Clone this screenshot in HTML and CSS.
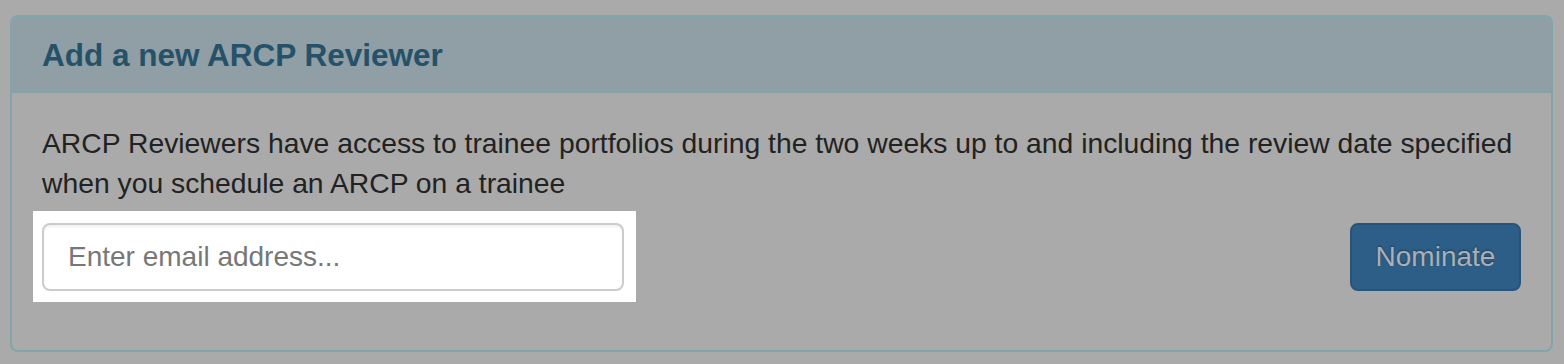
FILE: index.html
```html
<!DOCTYPE html>
<html>
<head>
<meta charset="utf-8">
<link rel="stylesheet" href="styles.css">
</head>
<body>
<div class="page">
  <div class="panel">
    <div class="panel-heading">
      <h3 class="panel-title">Add a new ARCP Reviewer</h3>
    </div>
    <div class="panel-body">
      <p class="intro">ARCP Reviewers have access to trainee portfolios during the two weeks up to and including the review date specified when you schedule an ARCP on a trainee</p>
      <div class="form-row">
        <div class="highlight">
          <input class="email" type="text" placeholder="Enter email address...">
        </div>
        <button class="btn-nominate" type="button">Nominate</button>
      </div>
    </div>
  </div>
</div>
</body>
</html>
```

FILE: styles.css
```css
html, body {
  margin: 0;
  padding: 0;
}
body {
  background: #aaaaaa;
  font-family: "Liberation Sans", Arial, Helvetica, sans-serif;
  width: 1564px;
  height: 364px;
  overflow: hidden;
}
.page {
  padding: 15px 11px 0 10px;
}
.panel {
  border: 2px solid #82a4ab;
  border-radius: 8px;
}
.panel-heading {
  background: #909fa5;
  border-bottom: 2px solid #82a4ab;
  border-radius: 6px 6px 0 0;
  height: 76px;
  display: flex;
  align-items: center;
  padding: 0 30px;
  box-sizing: border-box;
}
.panel-title {
  margin: 0;
  font-size: 31.5px;
  font-weight: bold;
  color: #255169;
  padding-top: 2px;
}
.panel-body {
  padding: 30px 30px 59px 30px;
}
.intro {
  margin: 0 0 20px 0;
  font-size: 28.3px;
  line-height: 40px;
  color: #222222;
}
.form-row {
  display: flex;
  justify-content: space-between;
  align-items: center;
}
.highlight {
  position: relative;
  z-index: 0;
}
.highlight::before {
  content: "";
  position: absolute;
  top: -12px;
  left: -9px;
  right: -12px;
  bottom: -11px;
  background: #ffffff;
  z-index: -1;
}
.email {
  display: block;
  width: 582px;
  height: 68px;
  box-sizing: border-box;
  border: 2px solid #cccccc;
  border-radius: 8px;
  padding: 0 24px;
  font-family: "Liberation Sans", Arial, Helvetica, sans-serif;
  font-size: 28px;
  color: #555555;
  background: #ffffff;
  box-shadow: inset 0 2px 2px rgba(0,0,0,0.06);
  outline: none;
}
.email::placeholder {
  color: #777777;
}
.btn-nominate {
  width: 171px;
  height: 68px;
  box-sizing: border-box;
  background: #2d5e87;
  border: 2px solid #285479;
  border-radius: 8px;
  color: #aab0b6;
  font-family: "Liberation Sans", Arial, Helvetica, sans-serif;
  font-size: 28px;
  text-shadow: 0 -1px 2px rgba(0,0,0,0.35);
  padding: 0;
}
```
